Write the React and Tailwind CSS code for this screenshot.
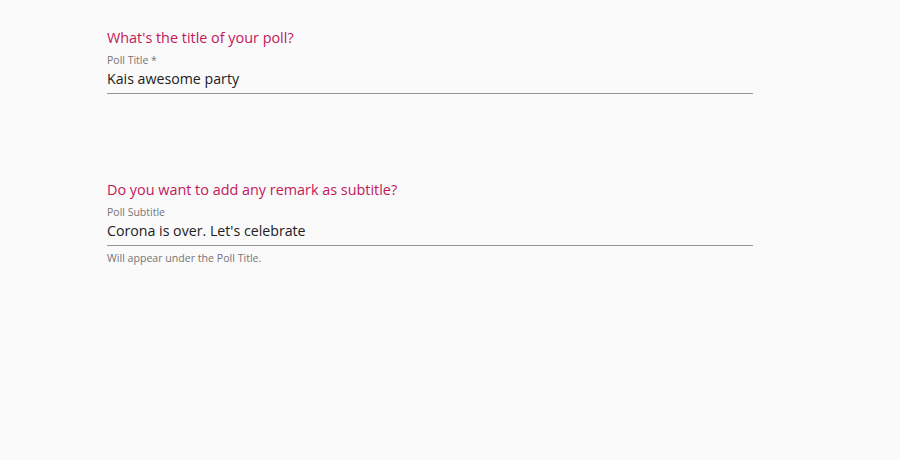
import { useState } from "react";

function PollField({ question, label, value, onChange, hint, className }) {
  return (
    <div className={className}>
      <h2 className="text-[14.4px] leading-[18px] text-[#c2185b]">{question}</h2>
      <label className="mt-[6px] block text-[10.5px] leading-[14px] text-[#757575]">
        {label}
      </label>
      <input
        type="text"
        value={value}
        onChange={(e) => onChange(e.target.value)}
        className="mt-[2px] block w-full border-b border-[#949494] bg-transparent pb-[4px] text-[14.2px] leading-[20px] text-[#212121] outline-none"
      />
      {hint && (
        <p className="mt-[5px] text-[10.6px] leading-[14px] text-[#757575]">{hint}</p>
      )}
    </div>
  );
}

export default function App() {
  const [poll, setPoll] = useState({
    title: "Kais awesome party",
    subtitle: "Corona is over. Let's celebrate",
  });

  return (
    <div
      className="h-[460px] w-[900px] bg-[#fafafa] pl-[107px] pt-[29px]"
      style={{ fontFamily: '"Open Sans", sans-serif' }}
    >
      <div className="w-[646px]">
        <PollField
          question="What's the title of your poll?"
          label="Poll Title *"
          value={poll.title}
          onChange={(v) => setPoll({ ...poll, title: v })}
        />
        <PollField
          className="mt-[87px]"
          question="Do you want to add any remark as subtitle?"
          label="Poll Subtitle"
          value={poll.subtitle}
          onChange={(v) => setPoll({ ...poll, subtitle: v })}
          hint="Will appear under the Poll Title."
        />
      </div>
    </div>
  );
}
